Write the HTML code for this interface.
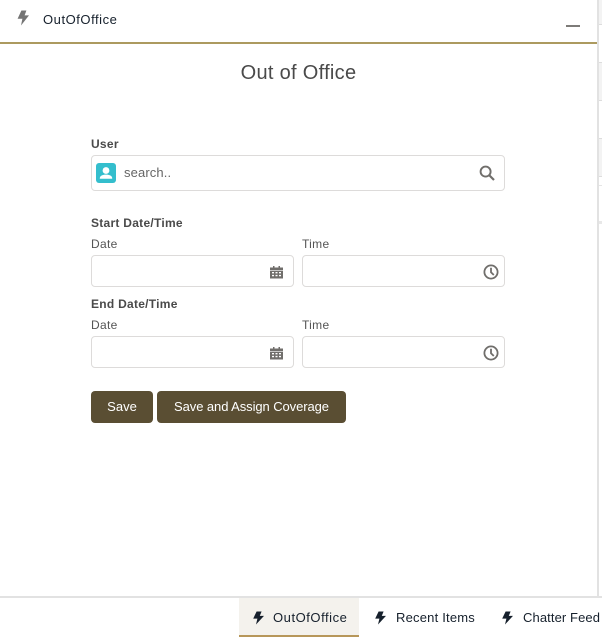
<!DOCTYPE html>
<html><head><meta charset="utf-8">
<style>
html,body{margin:0;padding:0;background:#fff}
body{width:602px;height:637px;overflow:hidden;position:relative;font-family:"Liberation Sans",sans-serif;color:#3e3e3c}
.a{position:absolute;white-space:nowrap}
.box{position:absolute;box-sizing:border-box;background:#fff;border:1px solid #dddbda;border-radius:4px}
.b{font-size:12px;font-weight:bold;color:#4a4a4a;letter-spacing:.27px;line-height:16px}
.l{font-size:12px;color:#555;letter-spacing:.3px;line-height:16px}
.btn{position:absolute;top:391px;height:32px;background:#5a4e33;border-radius:4px;color:#fff;font-size:13px;line-height:32px;text-align:center}
.t{font-size:13px;color:#16202c;line-height:16px}
svg{position:absolute;display:block}
</style></head><body>

<!-- right background strip -->
<div class="a" style="left:597px;top:0;width:5px;height:597px;background:#fff"></div>
<div class="a" style="left:598px;top:0;width:4px;height:24px;background:#f3f3f3"></div>
<div class="a" style="left:598px;top:63px;width:4px;height:37px;background:#f3f3f3"></div>
<div class="a" style="left:598px;top:139px;width:4px;height:37px;background:#f3f3f3"></div>
<div class="a" style="left:598px;top:24px;width:4px;height:1px;background:#ddd"></div>
<div class="a" style="left:598px;top:62px;width:4px;height:1px;background:#ddd"></div>
<div class="a" style="left:598px;top:100px;width:4px;height:1px;background:#ddd"></div>
<div class="a" style="left:598px;top:138px;width:4px;height:1px;background:#ddd"></div>
<div class="a" style="left:598px;top:176px;width:4px;height:1px;background:#ddd"></div>
<div class="a" style="left:598px;top:185px;width:4px;height:1px;background:#e5e5e5"></div>
<div class="a" style="left:598px;top:221px;width:4px;height:3px;background:#e8e8e8"></div>
<div class="a" style="left:597px;top:0;width:2px;height:597px;background:#e2e2e2"></div>

<!-- header -->
<svg style="left:16px;top:10px" width="14" height="16" viewBox="0 0 14 16"><path d="M5.4 0.5H10.4L8.6 5.4H13L5 15.5L6.4 8.8H1.6Z" fill="#747474"/></svg>
<div class="a" style="left:43px;top:12px;font-size:13px;line-height:16px;color:#16202c;letter-spacing:.55px">OutOfOffice</div>
<div class="a" style="left:566px;top:25px;width:14px;height:2px;background:#7d7b78"></div>
<div class="a" style="left:0;top:42px;width:597px;height:2px;background:#ac9a5f"></div>

<div class="a" style="left:0;width:597px;top:62px;text-align:center;font-size:20px;line-height:22px;color:#4a4a4a;letter-spacing:.3px">Out of Office</div>

<!-- user -->
<div class="a b" style="left:91px;top:136px">User</div>
<div class="box" style="left:91px;top:155px;width:414px;height:36px"></div>
<svg style="left:96px;top:163px" width="20" height="20" viewBox="0 0 20 20"><rect width="20" height="20" rx="3" fill="#34becd"/><circle cx="10" cy="7.5" r="3.4" fill="#fff"/><path d="M3.8 15.2C3.8 12.6 6.6 11.6 10 11.6S16.2 12.6 16.2 15.2V15.8H3.8Z" fill="#fff"/></svg>
<div class="a" style="left:124px;top:165px;font-size:13px;line-height:16px;color:#666;letter-spacing:.12px">search..</div>
<svg style="left:479px;top:165px" width="16" height="16" viewBox="0 0 16 16"><circle cx="6.6" cy="6.6" r="5" fill="none" stroke="#706e6b" stroke-width="1.9"/><path d="M10.4 10.4L15 15" stroke="#706e6b" stroke-width="2.2" fill="none"/></svg>

<!-- start -->
<div class="a b" style="left:91px;top:215px">Start Date/Time</div>
<div class="a l" style="left:91px;top:236px">Date</div>
<div class="a l" style="left:302px;top:236px">Time</div>
<div class="box" style="left:91px;top:255px;width:203px;height:32px"></div>
<div class="box" style="left:302px;top:255px;width:203px;height:32px"></div>
<svg style="left:270px;top:265px" width="13" height="14" viewBox="0 0 13 14"><path d="M0 2.5H3V1H4.5V2.5H8.5V1H10V2.5H13V5H0Z" fill="#706e6b"/><path fill-rule="evenodd" d="M0 5.6H13V13.5H0ZM2 7V8.4H4V7ZM5.5 7V8.4H7.5V7ZM9 7V8.4H11V7ZM2 9.9V11.3H4V9.9ZM5.5 9.9V11.3H7.5V9.9ZM9 9.9V11.3H11V9.9Z" fill="#706e6b"/></svg>
<svg style="left:483px;top:264px" width="16" height="16" viewBox="0 0 16 16"><circle cx="8" cy="8" r="6.6" fill="none" stroke="#706e6b" stroke-width="1.8"/><path d="M8 3.8V8.2L10.8 11" fill="none" stroke="#706e6b" stroke-width="1.8"/></svg>

<!-- end -->
<div class="a b" style="left:91px;top:296px">End Date/Time</div>
<div class="a l" style="left:91px;top:317px">Date</div>
<div class="a l" style="left:302px;top:317px">Time</div>
<div class="box" style="left:91px;top:336px;width:203px;height:32px"></div>
<div class="box" style="left:302px;top:336px;width:203px;height:32px"></div>
<svg style="left:270px;top:346px" width="13" height="14" viewBox="0 0 13 14"><path d="M0 2.5H3V1H4.5V2.5H8.5V1H10V2.5H13V5H0Z" fill="#706e6b"/><path fill-rule="evenodd" d="M0 5.6H13V13.5H0ZM2 7V8.4H4V7ZM5.5 7V8.4H7.5V7ZM9 7V8.4H11V7ZM2 9.9V11.3H4V9.9ZM5.5 9.9V11.3H7.5V9.9ZM9 9.9V11.3H11V9.9Z" fill="#706e6b"/></svg>
<svg style="left:483px;top:345px" width="16" height="16" viewBox="0 0 16 16"><circle cx="8" cy="8" r="6.6" fill="none" stroke="#706e6b" stroke-width="1.8"/><path d="M8 3.8V8.2L10.8 11" fill="none" stroke="#706e6b" stroke-width="1.8"/></svg>

<!-- buttons -->
<div class="btn" style="left:91px;width:62px">Save</div>
<div class="btn" style="left:157px;width:189px;letter-spacing:-.08px">Save and Assign Coverage</div>

<!-- bottom bar -->
<div class="a" style="left:0;top:596px;width:602px;height:2px;background:#e2e2e2"></div>
<div class="a" style="left:239px;top:598px;width:120px;height:39px;box-sizing:border-box;background:#f4f2ed;border-bottom:2px solid #b7975a"></div>
<svg style="left:252px;top:611px" width="13" height="14" viewBox="0 0 13 14"><path d="M4.6 0.5H9.6L7.8 4.9H12L4 13.5L5.4 7.6H1.2Z" fill="#16202c"/></svg>
<div class="a t" style="left:273px;top:610px;letter-spacing:.55px">OutOfOffice</div>
<svg style="left:374px;top:611px" width="13" height="14" viewBox="0 0 13 14"><path d="M4.6 0.5H9.6L7.8 4.9H12L4 13.5L5.4 7.6H1.2Z" fill="#16202c"/></svg>
<div class="a t" style="left:396px;top:610px;letter-spacing:.2px">Recent Items</div>
<svg style="left:501px;top:611px" width="13" height="14" viewBox="0 0 13 14"><path d="M4.6 0.5H9.6L7.8 4.9H12L4 13.5L5.4 7.6H1.2Z" fill="#16202c"/></svg>
<div class="a t" style="left:523px;top:610px;letter-spacing:.1px">Chatter Feed</div>
</body></html>
